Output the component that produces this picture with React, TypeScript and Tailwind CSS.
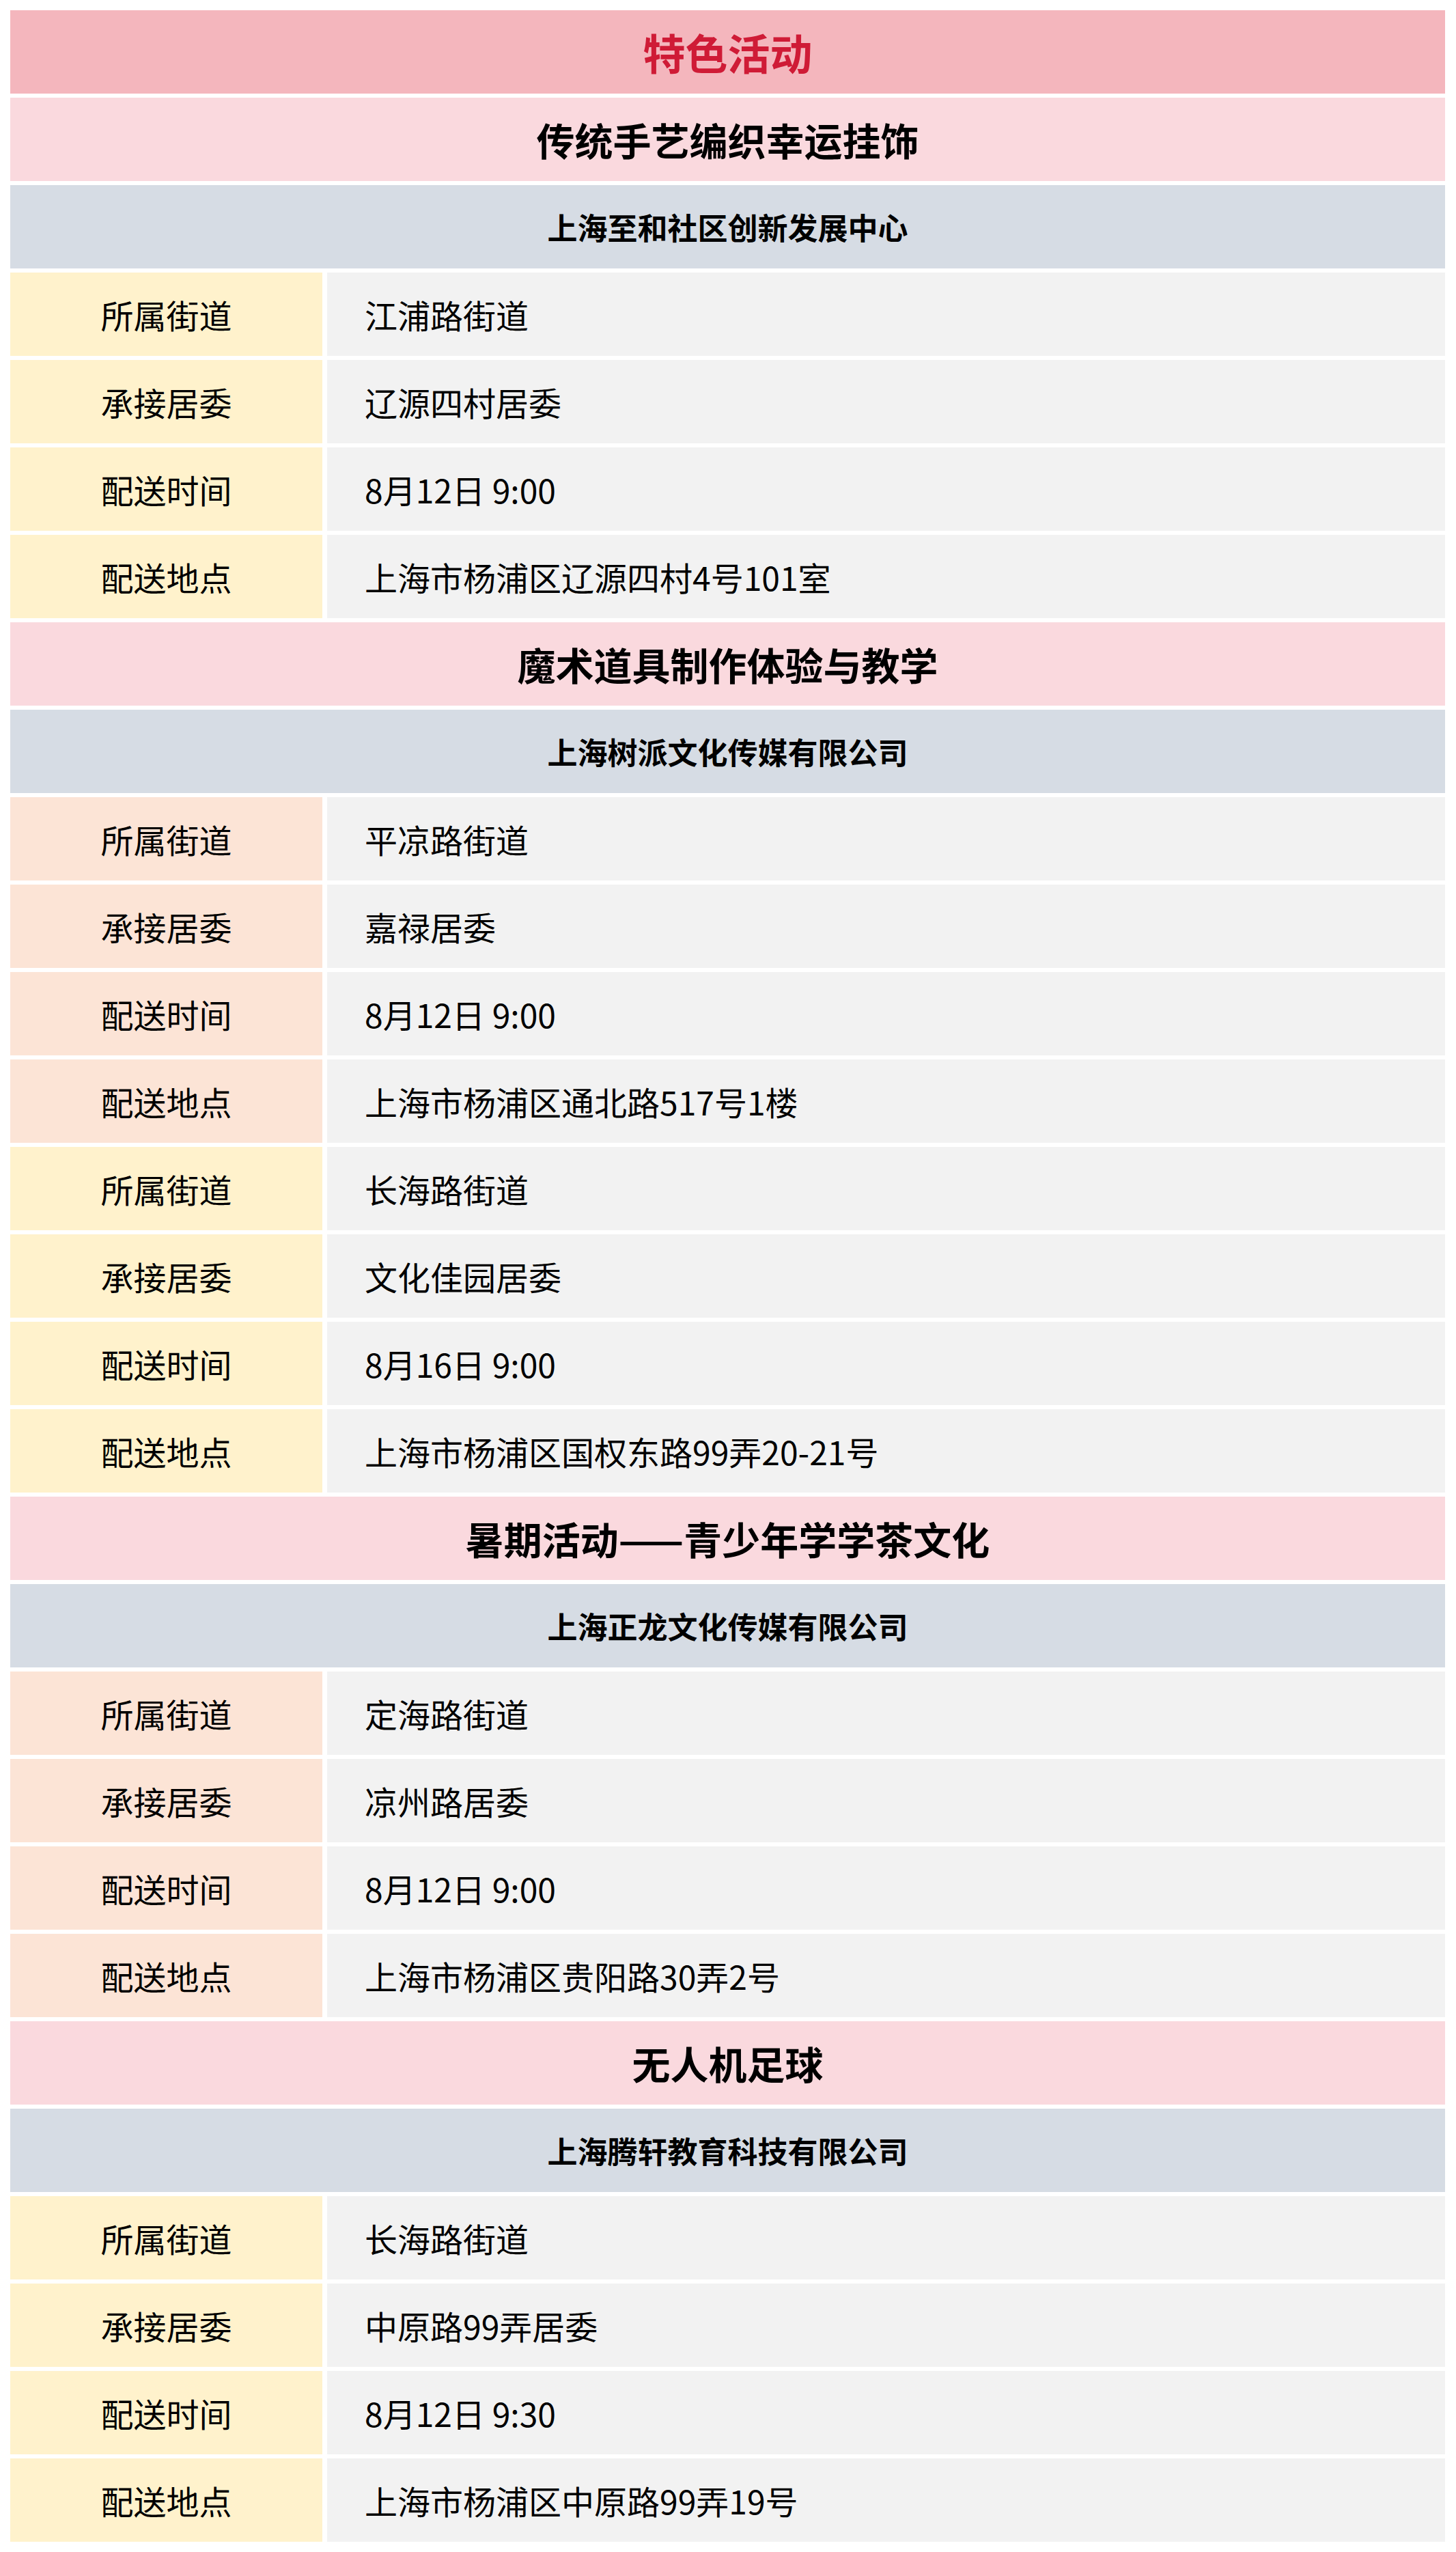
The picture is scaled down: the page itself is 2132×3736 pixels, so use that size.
type Row = { label: string; value: string; tone: 'yellow' | 'peach' }

type Section = {
  title: string
  org: string
  rows: Row[]
}

const y = 'yellow' as const
const p = 'peach' as const

const sections: Section[] = [
  {
    title: '传统手艺编织幸运挂饰',
    org: '上海至和社区创新发展中心',
    rows: [
      { label: '所属街道', value: '江浦路街道', tone: y },
      { label: '承接居委', value: '辽源四村居委', tone: y },
      { label: '配送时间', value: '8月12日 9:00', tone: y },
      { label: '配送地点', value: '上海市杨浦区辽源四村4号101室', tone: y },
    ],
  },
  {
    title: '魔术道具制作体验与教学',
    org: '上海树派文化传媒有限公司',
    rows: [
      { label: '所属街道', value: '平凉路街道', tone: p },
      { label: '承接居委', value: '嘉禄居委', tone: p },
      { label: '配送时间', value: '8月12日 9:00', tone: p },
      { label: '配送地点', value: '上海市杨浦区通北路517号1楼', tone: p },
      { label: '所属街道', value: '长海路街道', tone: y },
      { label: '承接居委', value: '文化佳园居委', tone: y },
      { label: '配送时间', value: '8月16日 9:00', tone: y },
      { label: '配送地点', value: '上海市杨浦区国权东路99弄20-21号', tone: y },
    ],
  },
  {
    title: '暑期活动——青少年学学茶文化',
    org: '上海正龙文化传媒有限公司',
    rows: [
      { label: '所属街道', value: '定海路街道', tone: p },
      { label: '承接居委', value: '凉州路居委', tone: p },
      { label: '配送时间', value: '8月12日 9:00', tone: p },
      { label: '配送地点', value: '上海市杨浦区贵阳路30弄2号', tone: p },
    ],
  },
  {
    title: '无人机足球',
    org: '上海腾轩教育科技有限公司',
    rows: [
      { label: '所属街道', value: '长海路街道', tone: y },
      { label: '承接居委', value: '中原路99弄居委', tone: y },
      { label: '配送时间', value: '8月12日 9:30', tone: y },
      { label: '配送地点', value: '上海市杨浦区中原路99弄19号', tone: y },
    ],
  },
]

export default function App() {
  return (
    <div
      className="bg-white pl-[15px] pr-[16px] py-[15px] flex flex-col gap-[6px] text-black"
      style={{ fontFamily: '"Noto Sans CJK SC", "Noto Sans", sans-serif' }}
    >
      {/* header */}
      <div className="h-[122px] bg-[#f4b6bd] flex items-center justify-center">
        <span className="text-[62px] font-bold text-[#cf1b36] leading-none">特色活动</span>
      </div>

      {sections.map((s, si) => (
        <div key={si} className="flex flex-col gap-[6px]">
          <div className="h-[122px] bg-[#fad9de] flex items-center justify-center">
            <span className="text-[56px] font-bold leading-none">{s.title}</span>
          </div>
          <div className="h-[122px] bg-[#d6dce4] flex items-center justify-center">
            <span className="text-[44px] font-bold leading-none">{s.org}</span>
          </div>
          {s.rows.map((r, ri) => (
            <div key={ri} className="grid grid-cols-[457px_1fr] gap-[7px] h-[122px]">
              <div
                className={`flex items-center justify-center text-[48px] leading-none ${
                  r.tone === 'yellow' ? 'bg-[#fff2cc]' : 'bg-[#fce4d6]'
                }`}
              >
                {r.label}
              </div>
              <div className="bg-[#f2f2f2] flex items-center pl-[55px] text-[48px] leading-none">
                {r.value}
              </div>
            </div>
          ))}
        </div>
      ))}
    </div>
  )
}
